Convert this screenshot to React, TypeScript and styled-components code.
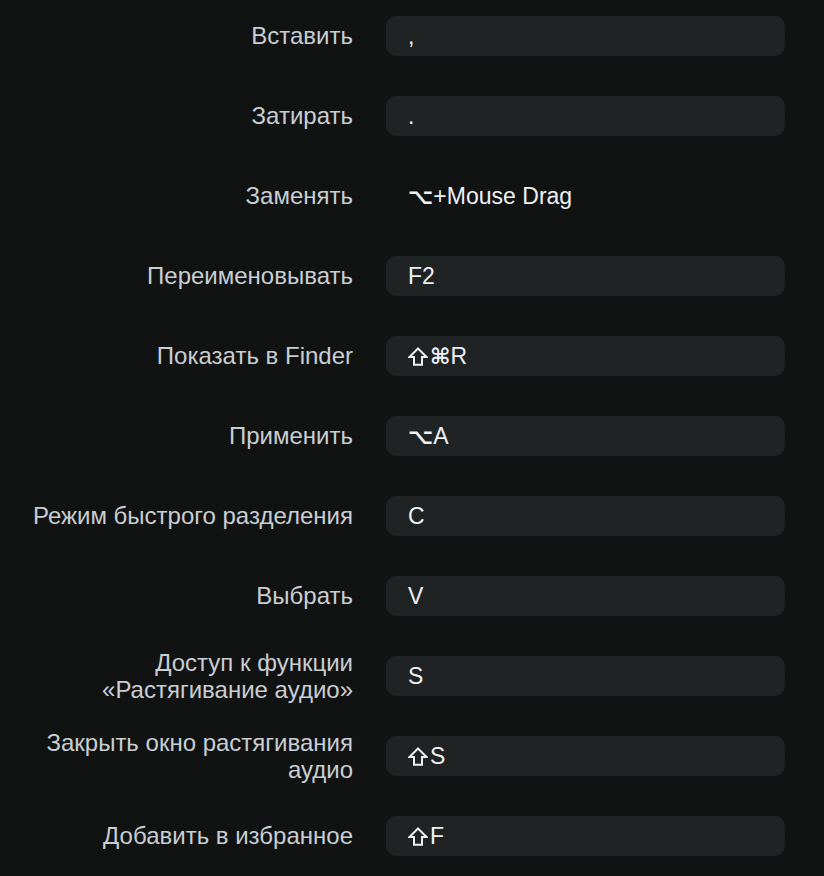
import React from "react";
import styled, { createGlobalStyle } from "styled-components";

const Global = createGlobalStyle`
  html, body {
    margin: 0;
    padding: 0;
    background: #111313;
  }
  body {
    font-family: "Liberation Sans", Arial, "DejaVu Sans", sans-serif;
  }
`;

const List = styled.div`
  display: flex;
  flex-direction: column;
  padding: 16px 39px 0 0;
  box-sizing: border-box;
  width: 824px;
  min-height: 876px;
  background: #111313;
`;

const Row = styled.div`
  display: flex;
  align-items: center;
  height: 40px;
  margin-bottom: 40px;
  gap: 33px;
`;

const Label = styled.div`
  flex: 0 0 353px;
  text-align: right;
  color: #c9ced2;
  font-size: 24px;
  line-height: 27px;
  margin-top: -1px;
`;

const Value = styled.div<{ $plain?: boolean }>`
  flex: 1;
  height: 40px;
  display: flex;
  align-items: center;
  padding-left: 22px;
  border-radius: 10px;
  background: ${(p) => (p.$plain ? "transparent" : "#202324")};
  color: #eef1f4;
  font-size: 23px;
  font-family: "Liberation Sans", Arial, "DejaVu Sans", sans-serif;
`;

const Glyph = styled.span`
  display: inline-block;
  font-family: "DejaVu Sans", sans-serif;
  font-size: 22px;
  font-weight: bold;
`;

const ShiftIcon = styled.svg`
  width: 20px;
  height: 19px;
  margin-right: 2px;
  flex: none;
`;

const Shift = () => (
  <ShiftIcon viewBox="0 0 20 19" aria-label="⇧">
    <path
      d="M10 1.5 L18.5 10 L14 10 L14 17.8 L6 17.8 L6 10 L1.5 10 Z"
      fill="none"
      stroke="#eef1f4"
      strokeWidth="2"
      strokeLinejoin="miter"
    />
  </ShiftIcon>
);

const renderValue = (v: string) =>
  Array.from(v).map((ch, i) =>
    ch === "⇧" ? (
      <Shift key={i} />
    ) : "⌘⌥".includes(ch) ? (
      <Glyph key={i}>{ch}</Glyph>
    ) : (
      <React.Fragment key={i}>{ch}</React.Fragment>
    )
  );

const rows: { label: React.ReactNode; value: string; plain?: boolean }[] = [
  { label: "Вставить", value: "," },
  { label: "Затирать", value: "." },
  { label: "Заменять", value: "⌥+Mouse Drag", plain: true },
  { label: "Переименовывать", value: "F2" },
  { label: "Показать в Finder", value: "⇧⌘R" },
  { label: "Применить", value: "⌥A" },
  { label: "Режим быстрого разделения", value: "C" },
  { label: "Выбрать", value: "V" },
  {
    label: (
      <>
        Доступ к функции
        <br />
        «Растягивание аудио»
      </>
    ),
    value: "S",
  },
  {
    label: (
      <>
        Закрыть окно растягивания
        <br />
        аудио
      </>
    ),
    value: "⇧S",
  },
  { label: "Добавить в избранное", value: "⇧F" },
];

export default function App() {
  return (
    <>
      <Global />
      <List>
        {rows.map((r, i) => (
          <Row key={i}>
            <Label>{r.label}</Label>
            <Value $plain={r.plain}>{renderValue(r.value)}</Value>
          </Row>
        ))}
      </List>
    </>
  );
}
